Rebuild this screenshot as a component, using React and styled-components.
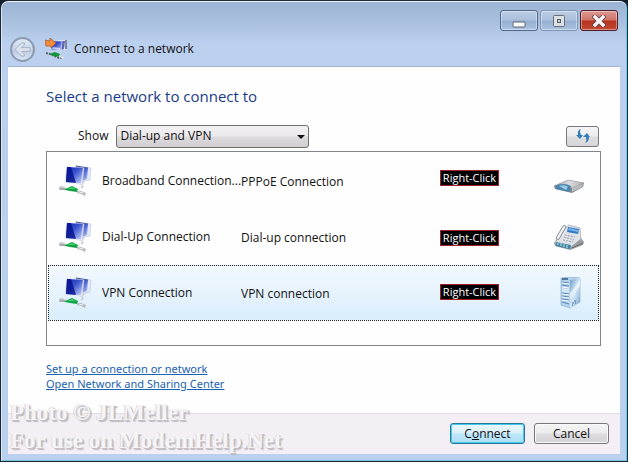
import styled, { createGlobalStyle } from "styled-components";
import { useState } from "react";

const connections = [
  { id: 1, name: "Broadband Connection...", type: "PPPoE Connection", device: "modem", tagTop: 16 },
  { id: 2, name: "Dial-Up Connection", type: "Dial-up connection", device: "phone", tagTop: 20 },
  { id: 3, name: "VPN Connection", type: "VPN connection", device: "server", tagTop: 18 },
];

const NetworkIcon = () => (
  <svg width="34" height="32" viewBox="0 0 34 32" aria-hidden="true">
    <defs>
      <linearGradient id="screen" x1="0" y1="0" x2="1" y2="1">
        <stop offset="0" stopColor="#1420a4" />
        <stop offset="0.45" stopColor="#3c55cf" />
        <stop offset="1" stopColor="#c9d7fa" />
      </linearGradient>
    </defs>
    <path d="M17 1 L33 3 L32 15 L20 17 Z" fill="#e3e8f5" stroke="#bcc5da" strokeWidth="0.6" />
    <path d="M18 2 L30 3 L29 14 L18 17 Z" fill="url(#screen)" />
    <path d="M18 1 L30 3" stroke="#4558a0" />
    <path d="M20 17 L28 15 L25 19 L22 20 Z" fill="#c9cfdd" />
    <path d="M9 2 L26 3 L24 19 L7 17 Z" fill="#eef1fa" stroke="#d3d9e8" strokeWidth="0.6" />
    <path d="M9 2 L25 3 L23 18 L8 17 Z" fill="url(#screen)" />
    <path d="M9 2 L13 2 L18 18 L8 17 Z" fill="#05108c" opacity="0.8" />
    <path d="M24 20 Q26 21 23 23" stroke="#c2c6cf" strokeWidth="1.5" fill="none" />
    <path d="M1 22 L4 21 L8 23 L7 25 L1 25 Z" fill="#c0c3c8" />
    <path d="M2 24 L7 24" stroke="#8d9298" />
    <path d="M7 24 L14 21 L20 24 L19 27 L12 26 L7 25 Z" fill="#12a545" />
    <path d="M9 24 L14 22 L18 24 Z" fill="#4bc873" />
    <path d="M19 26 L23 26 L28 28 L27 31 L23 29 L19 28 Z" fill="#b8bbc1" />
    <path d="M21 27 L25 28" stroke="#f4f4f4" />
  </svg>
);

const ConnectIcon = () => (
  <svg width="22" height="22" viewBox="0 0 22 22" aria-hidden="true">
    <path d="M13 2 L22 2 L21 12 L14 12 Z" fill="#dfe5f3" />
    <path d="M15 3 L20 3 L19 11 L15 12 Z" fill="#5869b8" />
    <path d="M21 2 L21 11" stroke="#2b3148" strokeWidth="1" />
    <path d="M7 3 L17 3 L16 13 L6 12 Z" fill="url(#screen)" stroke="#e3e9f7" strokeWidth="0.6" />
    <path d="M8 9 L15 10 L15 12 L7 11 Z" fill="#eff4ff" opacity="0.7" />
    <path d="M1 15 L5 16 L14 20 L18 19" stroke="#5c6268" strokeWidth="2" fill="none" strokeDasharray="2 1" />
    <path d="M4 16 L10 14 L15 16 L14 19 L9 18 Z" fill="#12973f" />
    <path d="M14 18 L19 20" stroke="#e5e7ea" strokeWidth="1.5" />
    <path d="M0 2 L5 3 L5 0 L11 5 L6 10 L6 8 L1 8 Z" fill="#f58b3c" stroke="#ab5a2b" strokeWidth="0.8" />
  </svg>
);

const ModemIcon = () => (
  <svg width="32" height="32" viewBox="0 0 32 32" aria-hidden="true">
    <defs>
      <linearGradient id="modemTop" x1="0" y1="0" x2="1" y2="0">
        <stop offset="0" stopColor="#8f9398" />
        <stop offset="0.5" stopColor="#dcdddf" />
        <stop offset="1" stopColor="#aeb0b2" />
      </linearGradient>
    </defs>
    <path d="M1 21 L15 15 L31 18 L30 22 L19 28 L2 24 Z" fill="#85898d" />
    <path d="M1 21 L15 15 L31 18 L18 23 Z" fill="url(#modemTop)" stroke="#94989c" strokeWidth="0.5" />
    <path d="M2 21 Q11 17 18 21 L17 27 L3 24 Z" fill="#4a86ad" />
    <path d="M6 21 Q12 19 15 22 L13 25 Z" fill="#9ac9e4" />
    <path d="M19 22 L30 19 L29 22 L19 27 Z" fill="#b9bbbd" />
  </svg>
);

const PhoneIcon = () => (
  <svg width="32" height="32" viewBox="0 0 32 32" aria-hidden="true">
    <path d="M1 22 L5 17 L27 16 L31 21 L30 24 L17 29 L2 25 Z" fill="#9a9da1" />
    <path d="M2 22 L10 8 L16 4 L27 7 L28 18 L18 26 Z" fill="#dfe2e6" stroke="#8d939b" strokeWidth="0.6" />
    <path d="M15 6 L26 8 L25 13 L14 11 Z" fill="#2f78c4" />
    <path d="M16 7 L25 9 L25 11 L15 9 Z" fill="#78b4ea" />
    <path d="M3 21 L18 24 L17 28 L3 25 Z" fill="#4385a5" />
    <path d="M5 22v2M8 22v3M11 23v3M14 24v3" stroke="#c8e3ed" />
    <path d="M12 14l10 2M11 16l10 3M10 19l10 2" stroke="#a3abb6" strokeWidth="1.2" strokeDasharray="2 1" />
    <path d="M3 17 L10 5 Q12 3 13 6 L6 18 Q4 20 3 17 Z" fill="#f2f3f5" stroke="#6f757e" strokeWidth="0.8" />
    <path d="M19 27 L30 22" stroke="#666b70" />
  </svg>
);

const ServerIcon = () => (
  <svg width="32" height="32" viewBox="0 0 32 32" aria-hidden="true">
    <defs>
      <linearGradient id="serverSide" x1="0" y1="0" x2="1" y2="1">
        <stop offset="0" stopColor="#6e9cc8" />
        <stop offset="0.5" stopColor="#d4e7f7" />
        <stop offset="1" stopColor="#6f9fca" />
      </linearGradient>
    </defs>
    <path d="M8 1 L18 0 L27 1 L27 25 L17 31 L8 28 Z" fill="#b5d2ea" stroke="#7da5c9" strokeWidth="0.6" />
    <path d="M17 3 L27 1 L27 25 L17 31 Z" fill="url(#serverSide)" />
    <path d="M17 16 L27 3 L27 9 L17 23 Z" fill="#f1f8fe" opacity="0.7" />
    <path d="M9 2 L15 2" stroke="#2f5b8a" strokeWidth="1.5" />
    <path d="M9 5l7 1M9 8l7 1M9 16l7 1M9 19l7 1M9 22l7 1M9 25l7 2" stroke="#5584b4" />
    <path d="M9 6l7 1M9 10l7 1M9 12l7 1M9 14l7 1M9 17l7 1M9 20l7 1M9 23l7 1" stroke="#eef7ff" />
    <path d="M19 26h2M21 24h2M19 28h1M22 26h1" stroke="#496f99" />
  </svg>
);

const devices = { modem: ModemIcon, phone: PhoneIcon, server: ServerIcon };

const Connection = ({ item, selected, onSelect }) => {
  const Device = devices[item.device];

  return (
    <S.Row $selected={selected} onClick={() => onSelect(item.id)}>
      <NetworkIcon />
      <S.Name>{item.name}</S.Name>
      <S.Type>{item.type}</S.Type>
      <S.Tag $top={item.tagTop}>Right-Click</S.Tag>
      <Device />
    </S.Row>
  );
};

const App = () => {
  const [selected, setSelected] = useState(3);

  return (
    <>
      <GlobalStyle />
      <S.Window>
        <S.TitleBar>
          <S.WindowButton aria-label="Minimize">
            <svg width="14" height="14" viewBox="0 0 14 14">
              <rect x="1" y="8" width="12" height="5" rx="1" fill="#fff" stroke="#5c6470" />
            </svg>
          </S.WindowButton>
          <S.WindowButton aria-label="Maximize" $dim>
            <svg width="14" height="14" viewBox="0 0 14 14">
              <rect x="1.5" y="1.5" width="11" height="11" rx="1" fill="#dcdfe3" stroke="#686d74" />
              <rect x="5.5" y="5.5" width="3" height="3" fill="#c3d0e2" stroke="#53585f" />
            </svg>
          </S.WindowButton>
          <S.WindowButton aria-label="Close" $close>
            <svg width="14" height="12" viewBox="0 0 14 12">
              <path d="M3 2 L11 10 M11 2 L3 10" stroke="#5f3c44" strokeWidth="5" strokeLinecap="square" />
              <path d="M3 2 L11 10 M11 2 L3 10" stroke="#f7f5f6" strokeWidth="3.4" strokeLinecap="square" />
            </svg>
          </S.WindowButton>
        </S.TitleBar>

        <S.Nav>
          <S.Back aria-label="Back">
            <svg width="17" height="15" viewBox="0 0 18 16">
              <path d="M1 8 L8 1 L11 1 L11 3 L8 6 L17 6 L17 10 L8 10 L11 13 L11 15 L8 15 Z" fill="#dbe3ef" stroke="#a3afc2" />
            </svg>
          </S.Back>
          <ConnectIcon />
          <span>Connect to a network</span>
        </S.Nav>

        <S.Client>
          <S.Main>
            <S.Heading>Select a network to connect to</S.Heading>
            <S.Toolbar>
              <label htmlFor="show">Show</label>
              <S.SelectBox>
                <S.Select id="show">
                  <option>Dial-up and VPN</option>
                </S.Select>
                <svg width="8" height="4" viewBox="0 0 8 4"><path d="M0 0H8L4 4Z" fill="#111" /></svg>
              </S.SelectBox>
              <S.Refresh aria-label="Refresh">
                <svg width="16" height="16" viewBox="0 0 16 16" fill="#2f7dbd">
                  <path d="M6 1 Q4 3 6 7 L8 7 L5 11 L1 7 L3 7 Q2 2 6 1 Z" />
                  <path d="M10 15 Q12 13 11 9 L8 9 L12 5 L15 9 L14 9 Q14 14 10 15 Z" />
                </svg>
              </S.Refresh>
            </S.Toolbar>
            <S.List>
              {connections.map((item) => (
                <Connection key={item.id} item={item} selected={item.id === selected} onSelect={setSelected} />
              ))}
            </S.List>
            <S.Links>
              <a href="#setup">Set up a connection or network</a>
              <a href="#center">Open Network and Sharing Center</a>
            </S.Links>
          </S.Main>
          <S.Footer>
            <S.Button $primary>C<u>o</u>nnect</S.Button>
            <S.Button>Cancel</S.Button>
          </S.Footer>
          <S.Watermark>
            Photo © JLMeller<br />
            For use on ModemHelp.Net
          </S.Watermark>
        </S.Client>
      </S.Window>
    </>
  );
};

export default App;

const GlobalStyle = createGlobalStyle`
  * {
    box-sizing: border-box;
  }
  body {
    margin: 0;
    background: #14202c;
    color: #111;
    font: 12px/16px "Open Sans", "Noto Sans", sans-serif;
  }
  button, select {
    font: inherit;
    color: inherit;
    padding: 0;
  }
  svg {
    display: block;
    flex: none;
  }
`;

const Window = styled.div`
  display: flex;
  flex-direction: column;
  min-height: 100vh;
  padding: 0 7px 7px;
  border: 1px solid #1e2733;
  border-right-color: #0d3550;
  border-radius: 8px 8px 0 0;
  background: linear-gradient(#9bb2d2, #a9bfde 20px, #bbd0ee 42px, #b9d1ee);
  box-shadow: inset 0 1px #eef4fc, inset 1px 0 #d9e6f7, inset -1px -1px #6fc6dc;
`;

const TitleBar = styled.header`
  display: flex;
  justify-content: flex-end;
  gap: 2px;
  height: 35px;
  padding: 9px 2px 0;
`;

const WindowButton = styled.button`
  display: flex;
  align-items: center;
  justify-content: center;
  width: 38px;
  height: 21px;
  border: 1px solid ${({ $close, $dim }) => ($close ? "#4f1d2a" : $dim ? "#8095b6" : "#52668c")};
  border-radius: 3px;
  background: ${({ $close }) =>
    $close
      ? "linear-gradient(#dd9a90, #cf7468 48%, #b5321f 52%, #c54a35)"
      : "linear-gradient(#bccde5, #abc0dd 48%, #96aed0 52%, #abc3e2)"};
  box-shadow: inset 0 0 0 1px rgba(255, 255, 255, 0.4);
`;

const Nav = styled.div`
  display: flex;
  align-items: center;
  height: 30px;
  padding: 0 2px 4px;

  & > svg {
    margin: 0 7px 0 10px;
  }
`;

const Back = styled.button`
  display: flex;
  align-items: center;
  justify-content: center;
  width: 25px;
  height: 25px;
  border: 2px solid #8c9bb1;
  border-radius: 50%;
  background: linear-gradient(#e0e9f6, #c8d5e9 50%, #b9c9e1 52%, #d8e4f5);
`;

const Client = styled.main`
  position: relative;
  display: flex;
  flex: 1;
  flex-direction: column;
  border-top: 1px solid #a3b5d0;
  background: #fefefe;
`;

const Main = styled.section`
  flex: 1;
  padding: 17px 19px 16px 38px;
`;

const Heading = styled.h1`
  margin: 0;
  color: #1a3c86;
  font-size: 15px;
  font-weight: 400;
  line-height: 24px;
`;

const Toolbar = styled.div`
  display: flex;
  align-items: center;
  gap: 8px;
  height: 24px;
  margin: 16px 2px 3px 32px;
`;

const SelectBox = styled.div`
  position: relative;

  & svg {
    position: absolute;
    top: 10px;
    right: 4px;
    pointer-events: none;
  }
`;

const Select = styled.select`
  display: block;
  appearance: none;
  width: 193px;
  height: 23px;
  padding: 0 3px;
  border: 1px solid #707070;
  border-radius: 3px;
  background: linear-gradient(#f2f0f2, #ebe9eb 48%, #dddadd 52%, #d0ced0);
`;

const Refresh = styled.button`
  display: flex;
  align-items: center;
  justify-content: center;
  width: 33px;
  height: 21px;
  margin-left: auto;
  border: 1px solid #77777c;
  border-radius: 3px;
  background: linear-gradient(#f6f5f6, #ebeaec 48%, #dddcdf 52%, #d8d6da);
`;

const List = styled.ul`
  min-height: 195px;
  margin: 0;
  padding: 1px;
  border: 1px solid #83838a;
  list-style: none;
`;

const Row = styled.li`
  position: relative;
  display: flex;
  align-items: center;
  height: 56px;
  padding: 0 13px 0 9px;
  border: 1px dotted ${({ $selected }) => ($selected ? "#222" : "transparent")};
  background: ${({ $selected }) => ($selected ? "linear-gradient(#f3f9fe, #d9edfb)" : "none")};
`;

const Name = styled.span`
  width: 139px;
  padding-left: 10px;
  white-space: nowrap;
`;

const Type = styled.span`
  flex: 1;
  padding: 2px 0 0 10px;
`;

// hint tags are laid over the rows
const Tag = styled.span`
  position: absolute;
  top: ${({ $top }) => $top}px;
  right: 99px;
  width: 59px;
  height: 16px;
  border: 1px solid #a31f2a;
  background: #000;
  color: #fff;
  font-size: 11px;
  line-height: 14px;
  text-align: center;
  white-space: nowrap;
`;

const Links = styled.nav`
  display: flex;
  flex-direction: column;
  align-items: flex-start;
  margin-top: 15px;
  font: 11px/15px "Noto Sans", "Open Sans", sans-serif;

  & a {
    color: #1a62b0;
  }
`;

const Footer = styled.footer`
  display: flex;
  justify-content: flex-end;
  gap: 9px;
  height: 41px;
  padding: 9px 11px 0;
  border-top: 1px solid #dfdde2;
  background: #f3eff4;
`;

const Button = styled.button`
  width: 75px;
  height: 21px;
  border: 1px solid ${({ $primary }) => ($primary ? "#2c7796" : "#77777c")};
  border-radius: 3px;
  background: ${({ $primary }) =>
    $primary
      ? "linear-gradient(#ecf7fd, #d9f0fb 48%, #bde6f9 52%, #b0dff5)"
      : "linear-gradient(#f6f5f6, #ebeaec 48%, #dddcdf 52%, #d3d1d5)"};
  box-shadow: inset 0 0 0 1px ${({ $primary }) => ($primary ? "#43c8f0" : "#faf9fa")};
`;

const Watermark = styled.p`
  position: absolute;
  left: 2px;
  bottom: -1px;
  margin: 0;
  color: #f6f4f7;
  font: 700 23px/28px "Liberation Serif", serif;
  text-shadow: -1px 0 #dcd9de, 1px 1px #c2bfc5, 2px 2px 1px #bbb8be;
  white-space: nowrap;
  pointer-events: none;
`;

const S = {
  Window,
  TitleBar,
  WindowButton,
  Nav,
  Back,
  Client,
  Main,
  Heading,
  Toolbar,
  SelectBox,
  Select,
  Refresh,
  List,
  Row,
  Name,
  Type,
  Tag,
  Links,
  Footer,
  Button,
  Watermark,
};
